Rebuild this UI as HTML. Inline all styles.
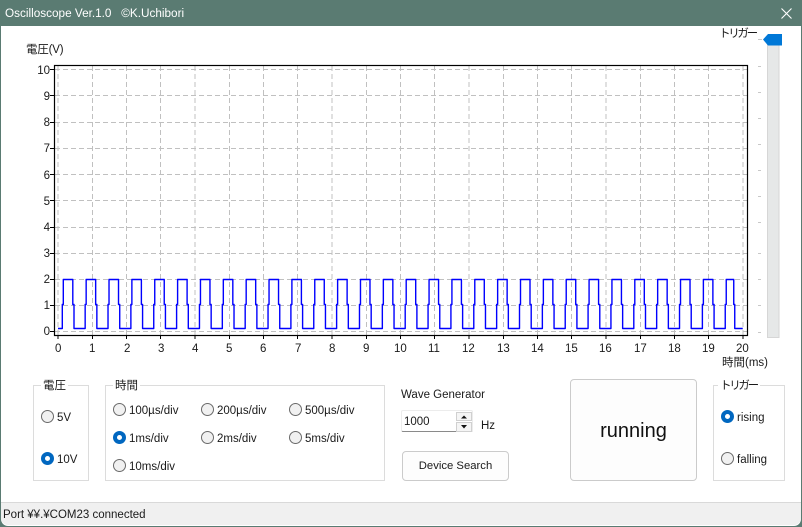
<!DOCTYPE html>
<html lang="ja">
<head>
<meta charset="utf-8">
<title>Oscilloscope</title>
<style>
html,body{margin:0;padding:0;width:802px;height:527px;overflow:hidden;background:#5a7b72;}
body{position:relative;font-family:"Liberation Sans","Noto Sans CJK JP",sans-serif;font-size:11.5px;color:#1a1a1a;}
#win{position:absolute;left:1px;top:26px;width:800px;height:500px;background:#fff;border-radius:0 0 7px 7px;overflow:hidden;}
.t{position:absolute;white-space:nowrap;line-height:14px;}
#title{left:5px;top:7px;color:#fff;font-size:11.75px;}
#status{position:absolute;left:1px;top:502px;width:800px;height:23px;background:#f0f0f0;border-top:1px solid #d9d9d9;box-sizing:border-box;border-radius:0 0 7px 7px;}
.g{position:absolute;border:1px solid #dcdcdc;box-sizing:border-box;background:#fff;}
.lg{position:absolute;background:#fff;padding:0 2px;white-space:nowrap;line-height:14px;font-size:11.5px;}
.r{position:absolute;width:13px;height:13px;border-radius:50%;box-sizing:border-box;border:1px solid #6a6a6a;background:#f1f1f1;}
.r.c{border:4px solid #0067c0;background:#fff;}
.b{position:absolute;box-sizing:border-box;border:1px solid #cbcbcb;border-radius:4px;background:#fdfdfd;text-align:center;}
svg{position:absolute;left:0;top:0;}
</style>
</head>
<body>
<div id="win"></div>
<div class="t" id="title">Oscilloscope Ver.1.0&nbsp;&nbsp;&nbsp;©K.Uchibori</div>
<svg width="802" height="527" viewBox="0 0 802 527">
  <path d="M781.5 8.5l10 10M791.5 8.5l-10 10" stroke="#fff" stroke-width="1.1" fill="none"/>
  <path d="M58 66V335M92.5 66V335M126.5 66V335M160.5 66V335M195 66V335M229.5 66V335M263.5 66V335M297.5 66V335M332 66V335M366.5 66V335M400.5 66V335M434.5 66V335M469 66V335M503.5 66V335M537.5 66V335M571.5 66V335M606 66V335M640.5 66V335M674.5 66V335M708.5 66V335M743 66V335M55 331.5H747M55 305.5H747M55 279.5H747M55 253.5H747M55 227.5H747M55 200.5H747M55 174.5H747M55 148.5H747M55 122.5H747M55 95.5H747M55 69.5H747" stroke="#c0c0c0" stroke-width="1" stroke-dasharray="5 3" fill="none"/>
  <path d="M58 328.5h4.3
  v-24h1v-25h9.5v25h1.2v24h11.16v-24h1v-25h9.5v25h1.2v24h11.16v-24h1v-25h9.5v25h1.2v24h11.16v-24h1v-25h9.5v25h1.2v24h11.16v-24h1v-25h9.5v25h1.2v24h11.16
  v-24h1v-25h9.5v25h1.2v24h11.16v-24h1v-25h9.5v25h1.2v24h11.16v-24h1v-25h9.5v25h1.2v24h11.16v-24h1v-25h9.5v25h1.2v24h11.16v-24h1v-25h9.5v25h1.2v24h11.16
  v-24h1v-25h9.5v25h1.2v24h11.16v-24h1v-25h9.5v25h1.2v24h11.16v-24h1v-25h9.5v25h1.2v24h11.16v-24h1v-25h9.5v25h1.2v24h11.16v-24h1v-25h9.5v25h1.2v24h11.16
  v-24h1v-25h9.5v25h1.2v24h11.16v-24h1v-25h9.5v25h1.2v24h11.16v-24h1v-25h9.5v25h1.2v24h11.16v-24h1v-25h9.5v25h1.2v24h11.16v-24h1v-25h9.5v25h1.2v24h11.16
  v-24h1v-25h9.5v25h1.2v24h11.16v-24h1v-25h9.5v25h1.2v24h11.16v-24h1v-25h9.5v25h1.2v24h11.16v-24h1v-25h9.5v25h1.2v24h11.16v-24h1v-25h9.5v25h1.2v24h11.16
  v-24h1v-25h9.5v25h1.2v24h11.16v-24h1v-25h9.5v25h1.2v24h11.16v-24h1v-25h9.5v25h1.2v24h11.16v-24h1v-25h9.5v25h1.2v24h11.16
  v-24h1v-25h7.5v25h1v24h8" stroke="#0000ff" stroke-width="1.4" fill="none" stroke-linejoin="round"/>
  <rect x="54.5" y="65.5" width="693" height="270" fill="none" stroke="#000" stroke-width="1.2"/>
  <path d="M58 335V339M92.5 335V339M126.5 335V339M160.5 335V339M195 335V339M229.5 335V339M263.5 335V339M297.5 335V339M332 335V339M366.5 335V339M400.5 335V339M434.5 335V339M469 335V339M503.5 335V339M537.5 335V339M571.5 335V339M606 335V339M640.5 335V339M674.5 335V339M708.5 335V339M743 335V339M50 331.5H54M50 305.5H54M50 279.5H54M50 253.5H54M50 227.5H54M50 200.5H54M50 174.5H54M50 148.5H54M50 122.5H54M50 95.5H54M50 69.5H54" stroke="#000" stroke-width="1" fill="none"/>
  <rect x="767.5" y="44.5" width="11.5" height="293" fill="#e6e8e8" stroke="#d6d6d6"/>
  <path d="M763 39.5L768 34H782V45.5H768Z" fill="#0078d7"/>
  <path d="M758 39.5h4M758 66.5h3M758 92.5h3M758 118.5h3M758 144.5h3M758 170.5h3M758 196.5h3M758 222.5h3M758 253.5h3M758 279.5h3M758 305.5h3M758 332.5h3" stroke="#c8c8c8" fill="none"/>
</svg>
<div class="t" style="left:26px;top:43px;font-size:11.5px;letter-spacing:-.2px">電圧(V)</div>
<div class="t" style="left:719px;top:27px;font-size:11.5px;letter-spacing:-2.3px">トリガー</div>
<div class="t" style="left:722px;top:356px;font-size:11.5px">時間(ms)</div>

<div class="t" style="right:752px;top:64px">10</div>
<div class="t" style="right:752px;top:90px">9</div>
<div class="t" style="right:752px;top:116px">8</div>
<div class="t" style="right:752px;top:142px">7</div>
<div class="t" style="right:752px;top:169px">6</div>
<div class="t" style="right:752px;top:195px">5</div>
<div class="t" style="right:752px;top:221px">4</div>
<div class="t" style="right:752px;top:247px">3</div>
<div class="t" style="right:752px;top:273px">2</div>
<div class="t" style="right:752px;top:299px">1</div>
<div class="t" style="right:752px;top:325px">0</div>

<div class="t" style="left:55px;top:342px">0</div>
<div class="t" style="left:89px;top:342px">1</div>
<div class="t" style="left:124px;top:342px">2</div>
<div class="t" style="left:158px;top:342px">3</div>
<div class="t" style="left:192px;top:342px">4</div>
<div class="t" style="left:226px;top:342px">5</div>
<div class="t" style="left:260px;top:342px">6</div>
<div class="t" style="left:295px;top:342px">7</div>
<div class="t" style="left:329px;top:342px">8</div>
<div class="t" style="left:363px;top:342px">9</div>
<div class="t" style="left:394px;top:342px">10</div>
<div class="t" style="left:428px;top:342px">11</div>
<div class="t" style="left:462px;top:342px">12</div>
<div class="t" style="left:497px;top:342px">13</div>
<div class="t" style="left:531px;top:342px">14</div>
<div class="t" style="left:565px;top:342px">15</div>
<div class="t" style="left:599px;top:342px">16</div>
<div class="t" style="left:634px;top:342px">17</div>
<div class="t" style="left:668px;top:342px">18</div>
<div class="t" style="left:702px;top:342px">19</div>
<div class="t" style="left:736px;top:342px">20</div>

<div class="g" style="left:33px;top:385px;width:56px;height:96px"></div>
<div class="lg" style="left:41px;top:379px">電圧</div>
<div class="r" style="left:41px;top:410px"></div>
<div class="t" style="left:57px;top:411px">5V</div>
<div class="r c" style="left:41px;top:452px"></div>
<div class="t" style="left:57px;top:453px">10V</div>

<div class="g" style="left:105px;top:385px;width:280px;height:96px"></div>
<div class="lg" style="left:113px;top:379px">時間</div>
<div class="r" style="left:113px;top:403px"></div>
<div class="t" style="left:129px;top:404px">100µs/div</div>
<div class="r" style="left:201px;top:403px"></div>
<div class="t" style="left:217px;top:404px">200µs/div</div>
<div class="r" style="left:289px;top:403px"></div>
<div class="t" style="left:305px;top:404px">500µs/div</div>
<div class="r c" style="left:113px;top:431px"></div>
<div class="t" style="left:129px;top:432px">1ms/div</div>
<div class="r" style="left:201px;top:431px"></div>
<div class="t" style="left:217px;top:432px">2ms/div</div>
<div class="r" style="left:289px;top:431px"></div>
<div class="t" style="left:305px;top:432px">5ms/div</div>
<div class="r" style="left:113px;top:459px"></div>
<div class="t" style="left:129px;top:460px">10ms/div</div>

<div class="t" style="left:401px;top:388px">Wave Generator</div>
<div style="position:absolute;left:401px;top:410px;width:72px;height:22px;box-sizing:border-box;background:#fff;border:1px solid #ececec;border-bottom:1px solid #8a8a8a;border-radius:2px"></div>
<div class="t" style="left:404px;top:415px">1000</div>
<svg width="802" height="527" viewBox="0 0 802 527">
  <rect x="456.5" y="412.5" width="15" height="8" fill="#f5f5f5" stroke="#d0d0d0"/>
  <rect x="456.5" y="422.5" width="15" height="9" fill="#f5f5f5" stroke="#d0d0d0"/>
  <path d="M461 418.5h6l-3-3zM461 425h6l-3 3.5z" fill="#111"/>
</svg>
<div class="t" style="left:481px;top:419px">Hz</div>
<div class="b" style="left:402px;top:451px;width:107px;height:30px;line-height:29px;font-size:11.3px">Device Search</div>

<div class="b" style="left:570px;top:379px;width:127px;height:102px;line-height:103px;font-size:20px;color:#111">running</div>

<div class="g" style="left:713px;top:385px;width:72px;height:96px"></div>
<div class="lg" style="left:718px;top:379px;letter-spacing:-2.3px">トリガー&nbsp;</div>
<div class="r c" style="left:721px;top:410px"></div>
<div class="t" style="left:737px;top:411px">rising</div>
<div class="r" style="left:721px;top:452px"></div>
<div class="t" style="left:737px;top:453px">falling</div>

<div id="status"></div>
<div class="t" style="left:3px;top:508px;font-size:11.5px">Port ¥¥.¥COM23 connected</div>
</body>
</html>
